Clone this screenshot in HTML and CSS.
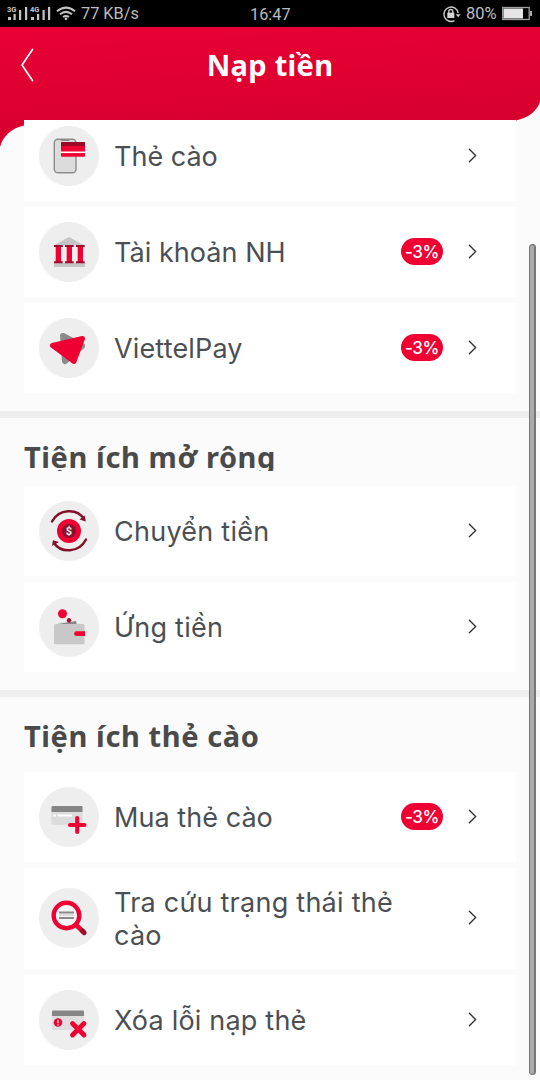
FILE: index.html
```html
<!DOCTYPE html>
<html lang="vi">
<head>
<meta charset="utf-8">
<title>Nạp tiền</title>
<link rel="stylesheet" href="styles.css">
</head>
<body>
<div class="status">
  <svg class="signals" width="70" height="27" viewBox="0 0 70 27">
    <g fill="#c4c4c4">
      <rect x="8" y="17" width="3" height="3"/><rect x="13.5" y="14" width="2.2" height="6"/><rect x="19" y="10" width="2.2" height="10"/><rect x="25" y="7" width="2.2" height="13"/>
      <rect x="31" y="17" width="3" height="3"/><rect x="37" y="14" width="2.2" height="6"/><rect x="42.5" y="10" width="2.2" height="10"/><rect x="48" y="7" width="2.2" height="13"/>
      <text x="7" y="12.3" class="net">3G</text><text x="30" y="12.3" class="net">4G</text>
    </g>
  </svg>
  <svg class="wifi" width="20" height="27" viewBox="0 0 20 27" fill="none" stroke="#c4c4c4" stroke-width="2">
    <path d="M1 11.3Q10 4 19 11.3M4 14.3Q10 9.4 16 14.3M7 17Q10 14.8 13 17"/><circle cx="10" cy="18.8" r="1.4" fill="#c4c4c4" stroke="none"/>
  </svg>
  <span class="rate">77 KB/s</span>
  <span class="clock">16:47</span>
  <svg class="lock" width="20" height="27" viewBox="0 0 20 27" fill="none" stroke="#c9c9c9" stroke-width="1.4">
    <path d="M12.5 20.6A7.2 7.2 0 1 1 16.2 13"/><path d="M13.6 14.2h5.2l-2.6 3z" fill="#c9c9c9" stroke="none"/><rect x="5.3" y="12.6" width="7" height="5.4" fill="#d5d5d5" stroke="none"/><path d="M6.8 13v-1.5a2 2 0 0 1 4 0V13"/>
  </svg>
  <span class="percent">80%</span>
  <svg class="battery" width="31" height="27" viewBox="0 0 31 27"><rect x=".7" y="7.5" width="26.5" height="12" fill="none" stroke="#a0a0a0" stroke-width="1.3"/><rect x="1.5" y="8.5" width="19.5" height="10" fill="#e5e5e5"/><rect x="28" y="11" width="2" height="5" fill="#aaa"/></svg>
</div>
<header class="header">
  <svg class="header-bg" width="540" height="123" viewBox="0 0 540 123">
    <defs><linearGradient id="hd" x1="0" y1="0" x2=".25" y2="1"><stop offset="0" stop-color="#e90034"/><stop offset="1" stop-color="#d5002d"/></linearGradient></defs>
    <path d="M0 0H540V75C537 84 528 91 516 93.500L24 98.500C12 101 3 109 0 120Z" fill="url(#hd)"/>
  </svg>
  <svg class="back" width="16" height="36" viewBox="0 0 16 36" fill="none" stroke="#fff" stroke-width="1.7" stroke-linecap="round"><path d="M12.500 2.500L2 18l10.500 15.500"/></svg>
  <h1 class="title">Nạp tiền</h1>
</header>
<main class="content">
  <section class="group first">
    <div class="card cut">
      <svg class="icon" width="60" height="60" viewBox="0 0 60 60"><circle cx="30" cy="30" r="30" fill="#eee"/>
        <rect x="15.300" y="13.200" width="21.700" height="33.500" rx="3.500" fill="#dcdcdc" stroke="#8c8c8c" stroke-width="1.400"/><path d="M21 13h10l-1 2h-8z" fill="#8c8c8c"/>
        <rect x="22" y="16" width="24" height="14.800" rx="1.200" fill="#ee0033"/><path d="M23 16h22q1 0 1 1v3H22v-3q0-1 1-1z" fill="#9a0a27"/><path d="M22 26.300h24" stroke="#fff" stroke-width="1.600"/>
      </svg>
      <span class="label l1">Thẻ cào</span>
      <svg class="chevron" viewBox="0 0 10 16"><path d="M1.500 1L8.500 8l-7 7"/></svg>
    </div>
    <div class="card">
      <svg class="icon" width="60" height="60" viewBox="0 0 60 60"><circle cx="30" cy="30" r="30" fill="#eee"/>
        <path d="M15 23.200L29 15.600q1-.5 2 0l14 7.600z" fill="#c5c5c5"/><path d="M15 41h31v4H15z" fill="#c5c5c5"/>
        <path d="M16.700 24h5.300v17h-5.300zM27.700 24H33v17h-5.300zM38.700 24H44v17h-5.300z" fill="#ee0033"/>
        <path d="M15 23h8.700v2H15zM26 23h8.700v2H26zM37 23h8.700v2H37zM15 39.300h8.700v2H15zM26 39.300h8.700v2H26zM37 39.300h8.700v2H37z" fill="#a10a2b"/>
      </svg>
      <span class="label l2">Tài khoản NH</span><span class="badge">-3%</span>
      <svg class="chevron" viewBox="0 0 10 16"><path d="M1.500 1L8.500 8l-7 7"/></svg>
    </div>
    <div class="card">
      <svg class="icon" width="60" height="60" viewBox="0 0 60 60"><circle cx="30" cy="30" r="30" fill="#eee"/>
        <g stroke-linejoin="round" stroke-width="6"><path d="M24 18L43 28 26 43z" fill="#8b8b8b" stroke="#8b8b8b"/><path d="M13.500 27.500L43.500 20.500 35 43.500z" fill="#ee0033" stroke="#ee0033" stroke-width="5"/></g>
      </svg>
      <span class="label l3">ViettelPay</span><span class="badge">-3%</span>
      <svg class="chevron" viewBox="0 0 10 16"><path d="M1.500 1L8.500 8l-7 7"/></svg>
    </div>
  </section>
  <section class="group extended">
    <h2 class="heading h-ext">Tiện ích mở rộng</h2>
    <div class="card">
      <svg class="icon" width="60" height="60" viewBox="0 0 60 60"><circle cx="30" cy="30" r="30" fill="#eee"/>
        <circle cx="30" cy="30" r="12" fill="#ee0033"/><circle cx="30" cy="30" r="7" fill="#8b1029"/>
        <g fill="none" stroke="#851129" stroke-width="2.500" stroke-linecap="round"><path d="M13 20.500C20 7.500 38 7 45 18M47 38.500C40 52 22 52.500 15 42"/></g><path d="M40.500 19l6.300 2-1.200-6zM13 45.500l1-5.700 6 1.700z" fill="#851129" transform="translate(0 -.5)"/>
        <text x="30" y="34.200" text-anchor="middle" class="coin">$</text>
      </svg>
      <span class="label l4">Chuyển tiền</span>
      <svg class="chevron" viewBox="0 0 10 16"><path d="M1.500 1L8.500 8l-7 7"/></svg>
    </div>
    <div class="card">
      <svg class="icon" width="60" height="60" viewBox="0 0 60 60"><circle cx="30" cy="30" r="30" fill="#eee"/>
        <path d="M18 27l19-3 1 4z" fill="#888"/><circle cx="30" cy="23.300" r="2.200" fill="#9a1230"/><circle cx="23.500" cy="16.800" r="4.500" fill="#ee0033"/><rect x="15" y="27" width="30.500" height="20.200" rx="1.500" fill="#c8c8c8"/><path d="M46 34.300h-8.500a2.300 2.300 0 0 0 0 4.700H46z" fill="#ee0033"/>
      </svg>
      <span class="label l5">Ứng tiền</span>
      <svg class="chevron" viewBox="0 0 10 16"><path d="M1.500 1L8.500 8l-7 7"/></svg>
    </div>
  </section>
  <section class="group scratch">
    <h2 class="heading h-scr">Tiện ích thẻ cào</h2>
    <div class="card">
      <svg class="icon" width="60" height="60" viewBox="0 0 60 60"><circle cx="30" cy="30" r="30" fill="#eee"/>
        <rect x="12.500" y="20" width="31" height="18" rx="1.500" fill="#dcdcdc"/><path d="M13.500 19h29q1 0 1 1v5h-31v-5q0-1 1-1z" fill="#858585"/><path d="M14 28.500h3M18.500 28.500H33" stroke="#fff" stroke-width="2"/><path d="M38.200 31v14M31 38h14.500" stroke="#ee0033" stroke-width="4" stroke-linecap="round"/>
      </svg>
      <span class="label l6">Mua thẻ cào</span><span class="badge">-3%</span>
      <svg class="chevron" viewBox="0 0 10 16"><path d="M1.500 1L8.500 8l-7 7"/></svg>
    </div>
    <div class="card tall">
      <svg class="icon" width="60" height="60" viewBox="0 0 60 60"><circle cx="30" cy="30" r="30" fill="#eee"/>
        <path d="M36 36l9 8.500" stroke="#ee0033" stroke-width="4.600"/><circle cx="27.500" cy="27.500" r="12.800" fill="#f5f5f5" stroke="#ee0033" stroke-width="4.400"/><path d="M43 42.500l2.200 2.200" stroke="#9b102c" stroke-width="4.800" stroke-linecap="round"/><path d="M20 24.500h15M20 30h15" stroke="#898989" stroke-width="2"/><path d="M20 27h15" stroke="#ddd" stroke-width="2"/>
      </svg>
      <span class="label l7">Tra cứu trạng thái thẻ<br>cào</span>
      <svg class="chevron" viewBox="0 0 10 16"><path d="M1.500 1L8.500 8l-7 7"/></svg>
    </div>
    <div class="card">
      <svg class="icon" width="60" height="60" viewBox="0 0 60 60"><circle cx="30" cy="30" r="30" fill="#eee"/>
        <rect x="13" y="21" width="32" height="19" rx="1" fill="#dedede"/><path d="M14 20.500h30q1 0 1 1V26H13v-4.500q0-1 1-1z" fill="#858585"/><circle cx="19" cy="32.500" r="4.300" fill="#ee0033"/><path d="M19 29.800v3.400M19 34.200v1.200" stroke="#fff" stroke-width="1.200"/><path d="M33.500 33.500l11.500 11.500M45 33.500L33.500 45" stroke="#ee0033" stroke-width="4.800" stroke-linecap="round"/>
      </svg>
      <span class="label l8">Xóa lỗi nạp thẻ</span>
      <svg class="chevron" viewBox="0 0 10 16"><path d="M1.500 1L8.500 8l-7 7"/></svg>
    </div>
  </section>
</main>
<div class="scrollbar"></div>
</body>
</html>
```
FILE: styles.css
```css
* { box-sizing: border-box; }
body { margin: 0; width: 540px; height: 1080px; overflow: hidden; position: relative; background: #fbfbfb; font-family: Inter, Roboto, sans-serif; }
.status { height: 27px; background: #000; color: #bdbdbd; display: flex; align-items: center; font: 16.3px/27px Roboto, sans-serif; white-space: nowrap; }
.status svg { flex: none; }
.signals { margin-right: -15px; }
.net { font: bold 7.5px Roboto, sans-serif; paint-order: stroke; stroke: #000; stroke-width: 2px; }
.wifi { margin-left: 1px; }
.rate { margin-left: 5px; width: 169px; }
.clock { width: 192px; padding-top: 2px; }
.lock { margin-right: 4px; }
.percent { width: 36px; font-size: 16.5px; }
.header { position: relative; height: 93px; display: flex; padding: 20px 20px 0; }
.header-bg { position: absolute; left: 0; top: 0; }
.back { position: relative; flex: none; }
.title { position: relative; margin: -4px 0 0; flex: 1; text-align: center; padding-right: 16px; color: #fff; font: bold 29px/44px "Noto Sans", sans-serif; letter-spacing: 0.3px; }
.content { position: relative; }
.group { padding: 0 24px 18px; display: flex; flex-direction: column; gap: 6px; }
.extended, .scratch { border-top: 7px solid #eee; }
.card { height: 90px; background: #fff; display: flex; align-items: center; padding: 0 39px 0 15px; }
.cut { height: 81px; padding-bottom: 9px; }
.tall { height: 101px; padding-bottom: 1px; }
.icon { flex: none; }
.label { flex: 1; margin-left: 15px; color: #4b4f54; font-size: 27px; line-height: 33px; white-space: nowrap; }
.l2, .l6 { letter-spacing: 0.05px; }
.l3 { letter-spacing: 0.15px; }
.l4, .l5 { letter-spacing: 0.25px; }
.l7 { letter-spacing: 0.25px; padding-top: 2px; }
.l8 { letter-spacing: 0.2px; }
.chevron { flex: none; width: 9px; height: 15px; margin: -1px 0 0 25px; fill: none; stroke: #333; stroke-width: 1.5; stroke-linecap: round; }
.badge { flex: none; width: 42px; height: 27px; margin-top: -1px; border-radius: 14px; background: #ee0033; color: #fff; font-size: 17px; font-weight: 500; line-height: 28px; text-align: center; letter-spacing: -0.4px; }
.heading { margin: 0; overflow: hidden; white-space: nowrap; color: #4a4a4a; font: bold 29px/40px "Noto Sans", sans-serif; letter-spacing: 0.6px; }
.h-ext { height: 53px; margin-bottom: 9px; padding-top: 19px; }
.h-scr { height: 69px; padding-top: 19px; }
.coin { font: bold 11px Roboto, sans-serif; fill: #eee; }
.scrollbar { position: absolute; left: 529px; top: 244px; width: 7px; height: 831px; border-radius: 4px; border: 1px solid #777; border-right-width: 2px; background: #aaa; }
```
